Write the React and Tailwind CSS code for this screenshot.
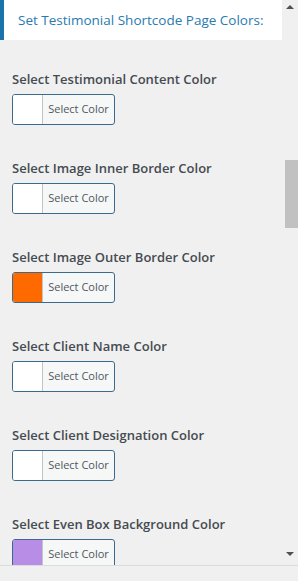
const rows = [
  { label: "Select Testimonial Content Color", color: "bg-white" },
  { label: "Select Image Inner Border Color", color: "bg-white" },
  { label: "Select Image Outer Border Color", color: "bg-[#ff6a00]" },
  { label: "Select Client Name Color", color: "bg-white" },
  { label: "Select Client Designation Color", color: "bg-white" },
  { label: "Select Even Box Background Color", color: "bg-[#b88de6]" },
];

function ColorField({ label, color }) {
  return (
    <div className="flex flex-col">
      <h4 className="text-[13px] font-semibold leading-[18px] text-[#454b51]">{label}</h4>
      <button className="mt-[6px] flex h-[31px] w-[103px] overflow-hidden rounded-[3px] border border-[#3b6b8c] bg-[#f6f7f7]">
        <span className={`h-full w-[30px] border-r border-[#c3c4c7] ${color}`} />
        <span className="flex h-full flex-1 items-center justify-center text-[11px] text-[#50575e]">
          Select Color
        </span>
      </button>
    </div>
  );
}

export default function App() {
  return (
    <div className="flex h-[581px] w-[298px] flex-col overflow-hidden bg-[#f0f0f0] font-['Open_Sans',sans-serif]">
      <div className="flex h-[566px] border-b border-[#dcdcde]">
        <div className="w-[282px] overflow-hidden">
          <div className="flex h-[40px] items-center border-l-4 border-[#1a73aa] bg-white pl-[14px]">
            <h3 className="text-[13.5px] text-[#2a7ab0]">Set Testimonial Shortcode Page Colors:</h3>
          </div>
          <div className="flex flex-col gap-[34px] px-[12px] pt-[30px]">
            {rows.map((r) => (
              <ColorField key={r.label} {...r} />
            ))}
          </div>
        </div>
        <div className="flex w-[16px] flex-col items-center bg-[#f0f0f0]">
          <span className="mt-[5px] h-0 w-0 border-x-[4px] border-b-[4px] border-x-transparent border-b-[#505050]" />
          <div className="mt-[151px] ml-[2px] h-[68px] w-[13px] bg-[#c1c1c1]" />
          <div className="flex-1" />
          <span className="mb-[9px] h-0 w-0 border-x-[4px] border-t-[4px] border-x-transparent border-t-[#505050]" />
        </div>
      </div>
    </div>
  );
}
